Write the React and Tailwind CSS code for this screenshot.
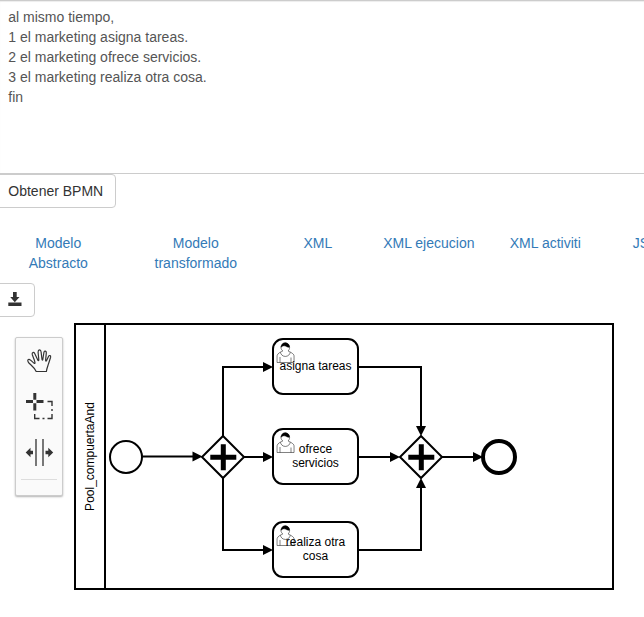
const lines = [
  'al mismo tiempo,',
  '1 el marketing asigna tareas.',
  '2 el marketing ofrece servicios.',
  '3 el marketing realiza otra cosa.',
  'fin',
];

const tabs = [
  { label: ['Modelo', 'Abstracto'], width: 'w-[116px]' },
  { label: ['Modelo', 'transformado'], width: 'w-[159px]' },
  { label: ['XML'], width: 'w-[85px]' },
  { label: ['XML ejecucion'], width: 'w-[137px]' },
  { label: ['XML activiti'], width: 'w-[96px]' },
  { label: ['JSON'], width: 'w-[116px]' },
];

const tasks = [
  { y: 15, text: ['asigna tareas'] },
  { y: 105, text: ['ofrece', 'servicios'] },
  { y: 198, text: ['realiza otra', 'cosa'] },
];

function Task({ y, text }) {
  return (
    <g transform={`translate(199 ${y})`}>
      <rect width="85" height="55" rx="10" fill="#fff" stroke="#000" strokeWidth="2" />
      <g stroke="#000" strokeWidth="0.5" fill="#fff">
        <path d="m15,12 c0.909,-0.845 1.594,-2.049 1.594,-3.385 0,-2.554 -1.805,-4.622 -4.357,-4.622 -2.552,0 -4.288,2.068 -4.288,4.622 0,1.348 0.974,2.562 1.896,3.405 -0.529,0.187 -5.669,2.097 -5.794,4.756 v6.718 h17 v-6.718 c0,-2.298 -5.528,-4.595 -6.051,-4.776z m-8,6 l0,5.5 m11,0 l0,-5" />
        <path d="m15,12 m2.162,1.009 c0,2.447 -2.158,4.431 -4.821,4.431 -2.665,0 -4.822,-1.981 -4.822,-4.431" />
        <path fill="#000" d="m15,12 m-6.9,-3.8 c0,0 2.251,-2.358 4.274,-1.177 2.024,1.181 4.221,1.537 4.124,0.965 -0.098,-0.57 -0.117,-3.791 -4.191,-4.136 -3.572,0.001 -4.208,3.67 -4.207,4.348z" />
      </g>
      <text textAnchor="middle" fill="#000">
        {text.map((line, i) => (
          <tspan key={line} x="42.5" y={(text.length === 1 ? 31 : 24) + i * 14}>
            {line}
          </tspan>
        ))}
      </text>
    </g>
  );
}

function Gateway({ x }) {
  return (
    <g transform={`translate(${x} 133)`}>
      <path d="M0 -21L21 0L0 21L-21 0Z" fill="#fff" stroke="#000" strokeWidth="2" />
      <path d="M-12.7 0.2H13.3M0.3 -12.8V13.2" stroke="#000" strokeWidth="5" />
    </g>
  );
}

function Arrow({ x, y, angle = 0 }) {
  return <path d="M0 0L-10 -5V5Z" transform={`translate(${x} ${y}) rotate(${angle})`} />;
}

function Diagram() {
  return (
    <svg width="540" height="267" className="block shrink-0 text-[12px]">
      <path d="M1 1H539V266H1ZM31 1V266" fill="none" stroke="#000" strokeWidth="2" />
      <text transform="translate(20 133.5) rotate(-90)" textAnchor="middle">
        Pool_compuertaAnd
      </text>
      <g transform="translate(0 1)">
        <g fill="none" stroke="#000" strokeWidth="2">
          <path d="M68 132.5H119" />
          <path d="M149 113V43H190M149 153V226H190M170 133H190" />
          <path d="M284 43H347V104M284 226H347V163M284 133H317" />
          <path d="M368 133H400" />
          <circle cx="52" cy="133" r="16" />
          <circle cx="425" cy="133" r="16" strokeWidth="4" />
        </g>
        <Gateway x={149} />
        <Gateway x={347} />
        <Arrow x={128.5} y={132.5} />
        <Arrow x={199} y={43} />
        <Arrow x={199} y={133} />
        <Arrow x={199} y={226} />
        <Arrow x={326} y={133} />
        <Arrow x={347} y={112} angle={90} />
        <Arrow x={347} y={154} angle={-90} />
        <Arrow x={409} y={133} />
        {tasks.map((task) => (
          <Task key={task.y} {...task} />
        ))}
      </g>
    </svg>
  );
}

function Palette() {
  return (
    <div className="mt-[14px] h-[159px] w-[48px] shrink-0 rounded-[2px] border border-[#ccc] bg-[#fafafa] shadow-[0_1px_2px_rgba(0,0,0,0.3)]">
      <svg width="46" height="157" viewBox="0 0 46 157" fill="none" stroke="#333">
        <path
          strokeWidth="1.2"
          strokeLinejoin="round"
          d="M20.2 33.5C18.5 29.8 15.7 27.7 13.1 25.2C11.2 23.3 11.5 21.1 13.1 21.4C15 21.8 16.3 24.2 18.4 25.4C19.5 25.8 18.8 23.6 18.2 21.7L16.3 16.7C15.7 14.4 17.7 13.5 18.7 15.5L21.9 22.2C22.4 23 22.9 22.4 22.8 21.5L22.1 14.2C22.1 11.2 24.8 11.1 25.1 14L26 21.5C26.1 22.3 26.6 22.2 26.8 21.5L27.9 14.5C28.4 12.2 30.5 12.8 30.3 15L29.6 22.3C29.6 23.3 30.2 23.3 30.6 22.4L32.5 18.4C33.3 16.8 35 17.6 34.6 19.2L32.7 25.2C32 27.8 30.8 29.8 30.4 33.5Z"
        />
        <g stroke="#333">
          <path strokeWidth="3" d="M10 63.5H17M20.5 63.5H27.5M18.8 55V61.8M18.8 65.3V72.5" />
          <path strokeWidth="1.4" d="M18.7 76V80.5H23.5M26.5 80.5H28.5M31.5 80.5H36V76M36 73V71M36 68V63.5H31.5" />
        </g>
        <path strokeWidth="1.3" d="M20 101V128M27 101V128" />
        <path
          fill="#333"
          stroke="none"
          d="M9.7 114.5L14.5 109.7V112.7H17V116.3H14.5V119.3ZM37.2 114.5L32.3 109.7V112.7H29.5V116.3H32.3V119.3Z"
        />
        <path stroke="#ddd" d="M5 141.5H41" />
      </svg>
    </div>
  );
}

export default function App() {
  return (
    <div className="h-[617px] w-[644px] overflow-hidden bg-white font-['Liberation_Sans',Arial,sans-serif] text-[14px] leading-[20px] text-[#333]">
      <div className="h-[174px] border-y border-[#ccc] pt-[6px] pl-[8.3px] text-[#555] shadow-[inset_0_1px_1px_rgba(0,0,0,0.075)]">
        {lines.map((line) => (
          <p key={line}>{line}</p>
        ))}
      </div>
      <button className="-ml-[5px] block h-[34px] w-[121px] rounded border border-[#ccc] bg-white pl-[12.3px] text-left">
        Obtener BPMN
      </button>
      <nav className="mt-[25px] flex h-[40px] w-[709px] pl-[0.3px] text-center text-[#337ab7]">
        {tabs.map(({ label, width }) => (
          <a key={label.join(' ')} className={`${width} shrink-0`}>
            {label.map((word) => (
              <span key={word} className="block">
                {word}
              </span>
            ))}
          </a>
        ))}
      </nav>
      <button className="mt-[10px] -ml-[5px] block h-[34px] w-[40px] rounded border border-[#ccc] bg-white pb-[2px] pl-3">
        <svg width="14" height="14" viewBox="0 0 14 14" fill="#333" className="block">
          <path d="M5 0H8.7V5H11.5L6.8 10.3L2.2 5H5ZM0.3 10.6H13.5V14H0.3Z" />
        </svg>
      </button>
      <main className="mt-[6px] flex gap-[11px] pl-[15px]">
        <Palette />
        <Diagram />
      </main>
    </div>
  );
}
